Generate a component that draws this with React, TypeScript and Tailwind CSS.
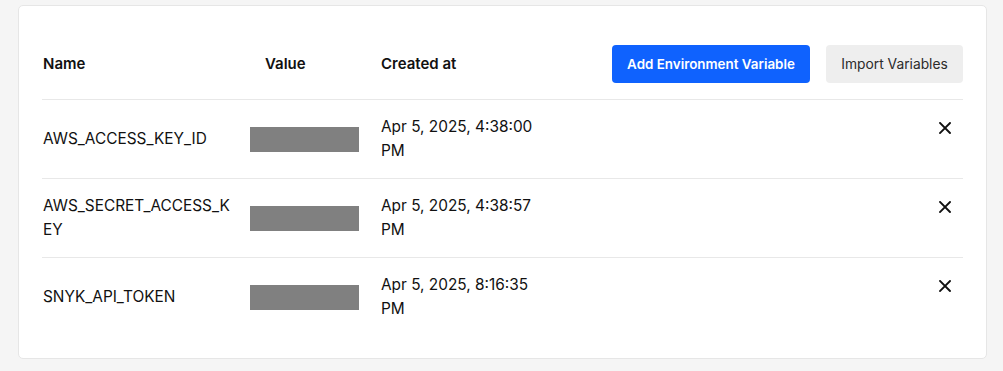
import React from "react";

const rows = [
  { name: "AWS_ACCESS_KEY_ID", created: "Apr 5, 2025, 4:38:00 PM" },
  { name: "AWS_SECRET_ACCESS_KEY", created: "Apr 5, 2025, 4:38:57 PM" },
  { name: "SNYK_API_TOKEN", created: "Apr 5, 2025, 8:16:35 PM" },
];

function XIcon() {
  return (
    <svg width="12" height="12" viewBox="0 0 12 12" fill="none" stroke="#111" strokeWidth="1.9" strokeLinecap="square">
      <path d="M1 1L11 11M11 1L1 11" />
    </svg>
  );
}

export default function App() {
  return (
    <div className="min-h-screen bg-[#f5f5f5] pl-[18px] pt-[5px] pr-4 font-['Inter',sans-serif] text-[#111]">
      <div className="h-[354px] w-[969px] rounded-[5px] border border-[#e6e6e6] bg-white pl-[23px] pr-[23px] pt-[39px]">
        <div className="grid grid-cols-[208px_131px_1fr] items-center border-b border-[#e8e8e8] pb-[16px]">
          <div className="pl-px text-[15px] font-semibold">Name</div>
          <div className="pl-[15px] text-[15px] font-semibold">Value</div>
          <div className="flex items-center justify-between">
            <div className="text-[15px] font-semibold">Created at</div>
            <div className="flex gap-4">
              <button className="h-[38px] w-[198px] rounded-[4px] bg-[#0f62fe] text-[13.4px] font-semibold text-white">
                Add Environment Variable
              </button>
              <button className="h-[38px] w-[137px] rounded-[4px] bg-[#eeeeee] text-[13.8px] text-[#2b2b2b]">
                Import Variables
              </button>
            </div>
          </div>
        </div>
        {rows.map((r, i) => (
          <div
            key={r.name}
            className={`grid grid-cols-[208px_131px_165px_1fr] ${i < rows.length - 1 ? "border-b border-[#e8e8e8]" : ""}`}
          >
            <div className="flex items-center py-[15px] pl-px pr-[11px] text-[15.4px] leading-6 break-all">{r.name}</div>
            <div className="flex items-center py-[15px]">
              <div className="h-[25px] w-[109px] bg-[#808080]" />
            </div>
            <div className="py-[15px] text-[15.4px] leading-6">{r.created}</div>
            <div className="mt-[16px] flex h-6 items-center justify-end pr-[12px]">
              <button className="flex items-center">
                <XIcon />
              </button>
            </div>
          </div>
        ))}
      </div>
    </div>
  );
}
